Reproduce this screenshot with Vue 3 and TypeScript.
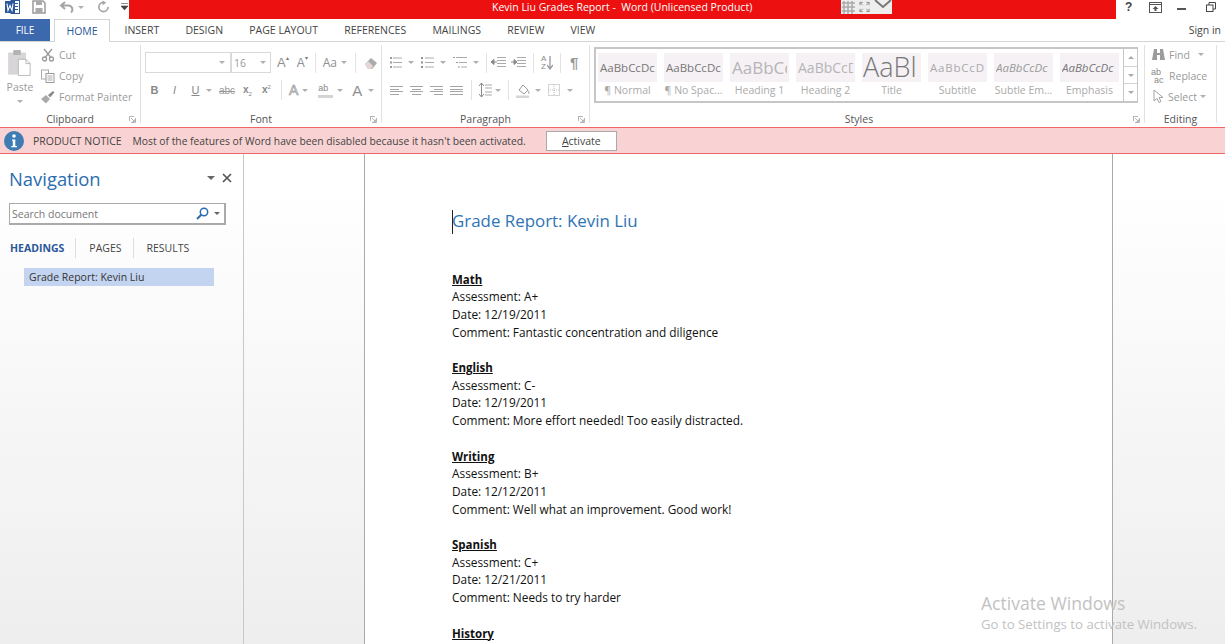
<script setup lang="ts">
interface Style { label: string; sample: string; cls: string }
const tabs: string[] = ['INSERT', 'DESIGN', 'PAGE LAYOUT', 'REFERENCES', 'MAILINGS', 'REVIEW', 'VIEW']
const styles: Style[] = [
  { label: '¶ Normal', sample: 'AaBbCcDc', cls: 's-normal' },
  { label: '¶ No Spac...', sample: 'AaBbCcDc', cls: 's-normal' },
  { label: 'Heading 1', sample: 'AaBbCc', cls: 's-h1' },
  { label: 'Heading 2', sample: 'AaBbCcD', cls: 's-h2' },
  { label: 'Title', sample: 'AaBl', cls: 's-title' },
  { label: 'Subtitle', sample: 'AaBbCcD', cls: 's-sub' },
  { label: 'Subtle Em...', sample: 'AaBbCcDc', cls: 's-em' },
  { label: 'Emphasis', sample: 'AaBbCcDc', cls: 's-em2' },
]
interface Section { title: string; lines: string[] }
const sections: Section[] = [
  { title: 'Math', lines: ['Assessment: A+', 'Date: 12/19/2011', 'Comment: Fantastic concentration and diligence'] },
  { title: 'English', lines: ['Assessment: C-', 'Date: 12/19/2011', 'Comment: More effort needed! Too easily distracted.'] },
  { title: 'Writing', lines: ['Assessment: B+', 'Date: 12/12/2011', 'Comment: Well what an improvement. Good work!'] },
  { title: 'Spanish', lines: ['Assessment: C+', 'Date: 12/21/2011', 'Comment: Needs to try harder'] },
  { title: 'History', lines: [] },
]
</script>

<template>
  <div class="app">
    <header class="titlebar">
      <div class="qat">
        <svg class="word" width="15" height="14" viewBox="0 0 15 14">
          <rect x="6" y=".5" width="8.500" height="13" fill="#fff" stroke="#2b579a" />
          <path d="M10 3.500h3M10 6.500h3M10 9.500h3" stroke="#2b579a" />
          <rect x="0" y="1" width="10" height="12" fill="#2b579a" />
          <path d="M2 3.500l1 7 2-5 2 5 1-7" fill="none" stroke="#fff" stroke-width="1.100" />
        </svg>
        <svg class="q-save" width="14" height="14" viewBox="0 0 14 14">
          <path d="M1 1h10l2 2v10H1z" fill="none" stroke="#9a9a9a" stroke-width="1.500" />
          <rect x="4" y="1" width="6" height="4" fill="#aaa" />
          <rect x="3.500" y="8" width="7" height="5" fill="#aaa" />
        </svg>
        <svg class="q-undo" width="16" height="13" viewBox="0 0 16 13">
          <path d="M6 1L2 4.500 6 8M2.500 4.500H10a4 4 0 0 1 2 7" fill="none" stroke="#a5a5a5" stroke-width="2" />
        </svg>
        <i class="caret q-c1"></i>
        <svg class="q-redo" width="13" height="14" viewBox="0 0 14 14">
          <path d="M7 2a5 5 0 1 0 5 5" fill="none" stroke="#a5a5a5" stroke-width="1.800" />
          <path d="M6 0l4 2.500L6 5z" fill="#a5a5a5" />
        </svg>
        <svg class="q-more" width="7" height="8" viewBox="0 0 7 8">
          <path d="M0 .5h7M0 3h7l-3.500 4z" fill="#444" stroke="#444" stroke-width=".6" />
        </svg>
      </div>
      <div class="redband">
        <span class="doc-title">Kevin Liu Grades Report -&nbsp; Word (Unlicensed Product)</span>
        <div class="floatbar">
          <svg width="13" height="13" viewBox="0 0 13 13">
            <path d="M0 2h13M0 6h13M0 10h13M2 0v13M6 0v13M10 0v13" stroke="#aaa" stroke-width="1.500" />
          </svg>
          <svg class="fb-full" width="11" height="12" viewBox="0 0 12 12">
            <path d="M1 4V1h3M8 1h3v3M11 8v3H8M4 11H1V8M1 1l3 3M11 1L8 4M11 11L8 8M1 11l3-3" fill="none" stroke="#888" />
          </svg>
          <svg class="fb-chev" width="18" height="10" viewBox="0 0 18 10">
            <path d="M1 1l8 7 8-7" fill="none" stroke="#777" stroke-width="2" />
          </svg>
        </div>
      </div>
      <div class="winctl">
        <span class="help">?</span>
        <svg width="13" height="11" viewBox="0 0 13 11">
          <rect x=".5" y=".5" width="12" height="10" fill="none" stroke="#555" />
          <path d="M0 2.500h13" stroke="#555" />
          <path d="M6.500 4l3 3h-2v2h-2V7h-2z" fill="#555" />
        </svg>
        <i class="minimize"></i>
        <svg width="10" height="10" viewBox="0 0 10 10">
          <rect x=".5" y="3" width="6.500" height="6.500" fill="none" stroke="#444" />
          <path d="M3 3V.5h6.500V7H7" fill="none" stroke="#444" />
        </svg>
      </div>
    </header>

    <nav class="tabs">
      <span class="tab-file">FILE</span>
      <span class="tab-home">HOME</span>
      <span v-for="t in tabs" :key="t" class="tab">{{ t }}</span>
      <span class="signin">Sign in</span>
    </nav>

    <section class="ribbon">
      <div class="group g-clip">
        <div class="g-body clip-body">
          <div class="paste">
            <svg width="26" height="28" viewBox="0 0 30 33">
              <rect x="1" y="3" width="21" height="26" fill="#d8d5d8" />
              <rect x="7" y="0" width="9" height="6" rx="1" fill="#b5b2b5" />
              <path d="M13 11h9l5 5v14H13z" fill="#fff" stroke="#b0b0b0" />
              <path d="M22 11v5h5" fill="none" stroke="#b0b0b0" />
            </svg>
            <span>Paste</span>
            <i class="caret"></i>
          </div>
          <div class="clip-list">
            <div class="clip-item">
              <svg width="14" height="14" viewBox="0 0 14 14">
                <path d="M3 1l6.500 8M11 1L4.500 9" stroke="#999" stroke-width="1.300" />
                <circle cx="3.500" cy="11" r="2" fill="none" stroke="#999" stroke-width="1.300" />
                <circle cx="10.500" cy="11" r="2" fill="none" stroke="#999" stroke-width="1.300" />
              </svg>
              <span>Cut</span>
            </div>
            <div class="clip-item">
              <svg width="14" height="14" viewBox="0 0 14 14">
                <rect x=".5" y="1" width="7" height="9" fill="#fff" stroke="#aaa" />
                <rect x="5" y="4.500" width="8" height="9" fill="#fff" stroke="#999" />
                <path d="M6.500 7h5M6.500 9h5M6.500 11h5" stroke="#aaa" />
              </svg>
              <span>Copy</span>
            </div>
            <div class="clip-item">
              <svg width="14" height="14" viewBox="0 0 14 14">
                <path d="M0 9l5-4 4 4-4 4.500z" fill="#aaa" />
                <path d="M7 5l5-4 1.500 1.500L9 7.500z" fill="#8a8a8a" />
              </svg>
              <span>Format Painter</span>
            </div>
          </div>
        </div>
        <footer class="g-label">
          <span>Clipboard</span>
          <svg class="launcher" width="7" height="7" viewBox="0 0 7 7"><path d="M0 .5h5M.5 0v5M6.500 2v4.500H2M2 2l3.500 3.500M5.500 3.500v2h-2" fill="none" stroke="#b5b5b5" /></svg>
        </footer>
      </div>

      <div class="group g-font">
        <div class="g-body rows">
          <div class="row r-font1">
            <div class="combo c-font"><i class="caret"></i></div>
            <div class="combo c-size"><span>16</span><i class="caret"></i></div>
            <span class="glyph big">A<sup>▴</sup></span>
            <span class="glyph mid">A<sup>▾</sup></span>
            <i class="sep s-a"></i>
            <span class="glyph aa">Aa</span><i class="caret"></i>
            <i class="sep s-a"></i>
            <svg class="erase" width="14" height="14" viewBox="0 0 14 14">
              <path d="M1 8l6-6 6 5-5 6H4z" fill="#aaa" />
              <path d="M1 8l3-3 5 5-2 3H4z" fill="#e6d6d6" />
            </svg>
          </div>
          <div class="row r-font2">
            <b class="fmt">B</b>
            <i class="fmt it">I</i>
            <u class="fmt und">U</u><i class="caret"></i>
            <s class="abc">abc</s>
            <span class="script">x<sub>2</sub></span>
            <span class="script">x<sup>2</sup></span>
            <i class="sep"></i>
            <span class="glyph outl">A</span><i class="caret"></i>
            <span class="hilite"><span>ab</span></span><i class="caret"></i>
            <span class="glyph col">A</span><i class="caret"></i>
          </div>
        </div>
        <footer class="g-label">
          <span>Font</span>
          <svg class="launcher" width="7" height="7" viewBox="0 0 7 7"><path d="M0 .5h5M.5 0v5M6.500 2v4.500H2M2 2l3.500 3.500M5.500 3.500v2h-2" fill="none" stroke="#b5b5b5" /></svg>
        </footer>
      </div>

      <div class="group g-para">
        <div class="g-body rows">
          <div class="row r-para1">
            <svg width="12" height="13" viewBox="0 0 12 13"><path d="M3 2h9M3 6.500h9M3 11h9" stroke="#aaa" /><path d="M0 1h2v2H0zM0 5.500h2v2H0zM0 10h2v2H0z" fill="#999" /></svg>
            <i class="caret"></i>
            <svg width="13" height="13" viewBox="0 0 13 13"><path d="M4 2h9M4 6.500h9M4 11h9" stroke="#aaa" /><path d="M0 1h2v2H0zM0 5.500h2v2H0zM0 10h2v2H0z" fill="#8f8f8f" /></svg>
            <i class="caret"></i>
            <svg width="14" height="13" viewBox="0 0 14 13"><path d="M3 1.500h11M6 6.500h8M8 11h6" stroke="#aaa" /><path d="M0 1h2v1H0zM3 6h2v1H3zM5 10.500h2v1H5z" fill="#999" /></svg>
            <i class="caret"></i>
            <i class="sep p-1"></i>
            <svg width="15" height="11" viewBox="0 0 15 11"><path d="M6 .5h9M6 3.500h9M6 6.500h9M6 9.500h9" stroke="#aaa" /><path d="M0 5h6M3 2.500L0 5l3 2.500z" fill="#8a8a8a" stroke="#8a8a8a" /></svg>
            <svg width="15" height="11" viewBox="0 0 15 11"><path d="M6 .5h9M6 3.500h9M6 6.500h9M6 9.500h9" stroke="#aaa" /><path d="M0 5h5M3 2.500L6 5 3 7.500z" fill="#8a8a8a" stroke="#8a8a8a" /></svg>
            <i class="sep p-2"></i>
            <span class="sort"><span>A<br />Z</span><svg width="6" height="14" viewBox="0 0 6 14"><path d="M3 0v12M0 9l3 4 3-4" fill="none" stroke="#999" stroke-width="1.300" /></svg></span>
            <i class="sep p-3"></i>
            <span class="pilcrow">¶</span>
          </div>
          <div class="row r-para2">
            <svg width="13" height="9" viewBox="0 0 13 9"><path d="M0 .5h13M0 3.500h9M0 5.500h13M0 8.500h9" stroke="#a5a5a5" /></svg>
            <svg width="13" height="9" viewBox="0 0 13 9"><path d="M0 .5h13M2 3.500h9M0 5.500h13M2 8.500h9" stroke="#a5a5a5" /></svg>
            <svg width="13" height="9" viewBox="0 0 13 9"><path d="M0 .5h13M4 3.500h9M0 5.500h13M4 8.500h9" stroke="#a5a5a5" /></svg>
            <svg width="13" height="9" viewBox="0 0 13 9"><path d="M0 .5h13M0 3.500h13M0 5.500h13M0 8.500h13" stroke="#a5a5a5" /></svg>
            <i class="sep q-1"></i>
            <svg width="13" height="14" viewBox="0 0 13 14"><path d="M6 2h7M6 5h7M6 9h7M6 12h7" stroke="#aaa" /><path d="M2.500 0v14M0 3l2.500-3L5 3M0 11l2.500 3L5 11" fill="none" stroke="#8a8a8a" /></svg>
            <i class="caret q-c"></i>
            <i class="sep q-2"></i>
            <svg width="15" height="15" viewBox="0 0 15 15"><path d="M3 7l4-5 5 5-4 4z" fill="#fff" stroke="#999" /><path d="M12 7c2 2 2 4 1 4s-1.500-2-1-4z" fill="#bbb" /><rect y="12.500" width="13" height="2.500" fill="#d6d6d6" /></svg>
            <i class="caret q-d"></i>
            <svg width="12" height="12" viewBox="0 0 12 12"><rect x=".5" y=".5" width="11" height="11" fill="none" stroke="#aaa" stroke-dasharray="1 1" /><path d="M6 0v12M0 6h12" stroke="#bbb" stroke-dasharray="1 1" /></svg>
            <i class="caret q-e"></i>
          </div>
        </div>
        <footer class="g-label">
          <span>Paragraph</span>
          <svg class="launcher" width="7" height="7" viewBox="0 0 7 7"><path d="M0 .5h5M.5 0v5M6.500 2v4.500H2M2 2l3.500 3.500M5.500 3.500v2h-2" fill="none" stroke="#b5b5b5" /></svg>
        </footer>
      </div>

      <div class="group g-styles">
        <div class="gallery">
          <div class="gal-items">
            <div v-for="s in styles" :key="s.cls + s.label" class="style">
              <div class="preview" :class="s.cls"><span>{{ s.sample }}</span></div>
              <div class="style-label">{{ s.label }}</div>
            </div>
          </div>
          <div class="gal-scroll">
            <span><i class="tri up"></i></span>
            <span><i class="tri"></i></span>
            <span><i class="tri bar"></i></span>
          </div>
        </div>
        <footer class="g-label">
          <span>Styles</span>
          <svg class="launcher" width="7" height="7" viewBox="0 0 7 7"><path d="M0 .5h5M.5 0v5M6.500 2v4.500H2M2 2l3.500 3.500M5.500 3.500v2h-2" fill="none" stroke="#b5b5b5" /></svg>
        </footer>
      </div>

      <div class="group g-edit">
        <div class="g-body edit-list">
          <div class="edit-item">
            <svg width="15" height="14" viewBox="0 0 15 14"><path d="M3 1h3v4h3V1h3l2 11h-5V7H6v5H1z" fill="#9c9c9c" /></svg>
            <span>Find</span><i class="caret find-c"></i>
          </div>
          <div class="edit-item">
            <span class="abac"><span>ab</span><span>ac</span></span>
            <span>Replace</span>
          </div>
          <div class="edit-item">
            <svg width="14" height="15" viewBox="0 0 14 15"><path d="M3 1v11l3-2.500 2 4 2-1-2-4h4z" fill="#fff" stroke="#a5a5a5" /></svg>
            <span>Select</span><i class="caret"></i>
          </div>
        </div>
        <footer class="g-label"><span>Editing</span></footer>
      </div>
    </section>

    <section class="notice">
      <svg width="20" height="20" viewBox="0 0 20 20">
        <circle cx="10" cy="10" r="10" fill="#3f7cb4" />
        <circle cx="10" cy="5" r="1.800" fill="#fff" />
        <path d="M8 8.500h3.300V15H13v1.200H7.300V15h1.500V9.700H8z" fill="#fff" />
      </svg>
      <strong>PRODUCT NOTICE</strong>
      <span class="notice-msg">Most of the features of Word have been disabled because it hasn't been activated.</span>
      <button class="activate" type="button"><u>A</u>ctivate</button>
    </section>

    <main class="workspace">
      <aside class="nav">
        <div class="nav-head">
          <h2>Navigation</h2>
          <i class="nav-menu"></i>
          <svg width="10" height="10" viewBox="0 0 10 10"><path d="M1 1l8 8M9 1l-8 8" stroke="#555" stroke-width="1.700" /></svg>
        </div>
        <div class="search">
          <span>Search document</span>
          <svg width="13" height="13" viewBox="0 0 13 13"><circle cx="8" cy="5" r="3.700" fill="none" stroke="#2b6cb0" stroke-width="1.500" /><path d="M5.300 7.700L1 12" stroke="#2b6cb0" stroke-width="2" /></svg>
          <i class="caret dark"></i>
        </div>
        <div class="nav-tabs">
          <span class="on">HEADINGS</span>
          <span>PAGES</span>
          <span>RESULTS</span>
        </div>
        <div class="heading-item">Grade Report: Kevin Liu</div>
      </aside>
      <div class="canvas">
        <article class="page">
          <h1><i class="cursor"></i>Grade Report: Kevin Liu</h1>
          <div v-for="sec in sections" :key="sec.title" class="sec">
            <h3>{{ sec.title }}</h3>
            <p v-for="l in sec.lines" :key="l">{{ l }}</p>
          </div>
        </article>
        <div class="watermark">
          <div class="wm-1">Activate Windows</div>
          <div class="wm-2">Go to Settings to activate Windows.</div>
        </div>
      </div>
    </main>
  </div>
</template>

<style>
html, body { margin: 0; height: 100%; overflow: hidden; background: #fff; }
</style>

<style scoped>
.app { width: 1225px; height: 644px; overflow: hidden; display: flex; flex-direction: column; font-family: "Open Sans", "Noto Sans", sans-serif; background: #fff; color: #444; }
svg { flex: none; display: block; }
i { font-style: normal; }

.titlebar { height: 19px; display: flex; flex: none; }
.qat { width: 129px; display: flex; align-items: center; flex: none; height: 14px; }
.word { margin-left: 5px; }
.q-save { margin-left: 12px; }
.q-undo { margin-left: 13px; }
.q-c1 { margin-left: 3px; }
.q-redo { margin-left: 13px; }
.q-more { margin-left: 11px; }
.redband { width: 987px; height: 19px; background: #ec1010; flex: none; display: flex; position: relative; }
.doc-title { position: absolute; left: 363px; top: 0; line-height: 15px; font-size: 10.500px; color: #fff; white-space: nowrap; }
.floatbar { position: absolute; left: 712px; top: 0; width: 51px; height: 14px; background: #eee; display: flex; align-items: center; overflow: hidden; }
.floatbar svg { margin-left: 1px; }
.floatbar .fb-full { margin-left: 4px; }
.floatbar .fb-chev { margin-left: 4px; margin-top: -7px; }
.winctl { flex: 1; display: flex; align-items: center; padding-left: 9px; gap: 15px; height: 14px; }
.help { font: bold 12px "Liberation Sans", sans-serif; color: #444; width: 9px; }
.minimize { width: 9px; height: 2px; background: #555; margin-left: 0; margin-right: 5px; margin-top: 3px; }

.tabs { height: 22px; flex: none; display: flex; align-items: stretch; font-size: 10.500px; line-height: 23px; color: #444; position: relative; }
.tab-file { width: 50px; background: #3c68ae; color: #fff; text-align: center; font-size: 10px; }
.tab-home { width: 56px; margin-left: 4px; border: 1px solid #d4d4d4; border-bottom: none; text-align: center; color: #2b579a; box-sizing: border-box; background: #fff; height: 23px; z-index: 1; }
.tab { padding: 0 13.100px; white-space: nowrap; }
.tab-home + .tab { margin-left: 1.400px; }
.signin { margin-left: auto; margin-right: 4px; }

.ribbon { height: 86px; flex: none; display: flex; border-top: 1px solid #d4d4d4; box-sizing: border-box; color: #9a9a9a; font-size: 10.500px; }
.group { display: flex; flex-direction: column; border-right: 1px solid #e1e1e1; height: 78px; margin-top: 3px; box-sizing: border-box; position: relative; flex: none; }
.g-clip { width: 141px; }
.g-font { width: 241px; }
.g-para { width: 208px; }
.g-styles { width: 555px; }
.g-edit { width: 72px; }
.g-body { flex: 1; min-height: 0; }
.g-label { height: 17px; flex: none; text-align: center; color: #555; font-size: 10.500px; line-height: 26px; position: relative; }
.launcher { position: absolute; right: 4px; bottom: 0; }

.clip-body { display: flex; }
.paste { width: 40px; display: flex; flex-direction: column; align-items: center; }
.paste svg { margin-top: 5px; }
.paste span { margin-top: 2px; line-height: 14px; }
.paste .caret { margin-top: 6px; }
.clip-list { margin-left: 1px; margin-top: -1px; }
.clip-item { display: flex; align-items: center; gap: 4px; height: 21px; white-space: nowrap; }

.caret { display: inline-block; flex: none; width: 0; height: 0; border-left: 3px solid transparent; border-right: 3px solid transparent; border-top: 3px solid #b0b0b0; }
.caret.dark { border-top-color: #666; }

.rows { display: flex; flex-direction: column; }
.row { display: flex; align-items: center; white-space: nowrap; }
.sep { flex: none; width: 1px; height: 20px; background: #e3e3e3; }

.r-font1 { height: 21px; margin-top: 7px; padding-left: 4px; }
.combo { height: 21px; box-sizing: border-box; border: 1px solid #d9d9d9; display: flex; align-items: center; justify-content: flex-end; padding-right: 3px; color: #9a9a9a; }
.c-font { width: 86px; padding-right: 5px; }
.c-size { width: 40px; justify-content: space-between; padding-left: 2px; padding-right: 4px; font-size: 10.500px; }
.glyph { color: #8f8f8f; line-height: 1; font-family: "Liberation Sans", sans-serif; }
.glyph sup { font-size: 6px; vertical-align: 7px; line-height: 0; color: #777; }
.big { font-size: 13px; margin-left: 6px; }
.mid { font-size: 12px; margin-left: 8px; }
.s-a { margin-left: 7px; }
.aa { font-size: 12px; margin-left: 7px; margin-right: 4px; font-family: "Open Sans", sans-serif; }
.aa + .caret { margin-right: 1px; }
.erase { margin-left: 8px; }
.r-font2 { height: 20px; margin-top: 7px; padding-left: 9px; }
.fmt { font: 11px "Liberation Sans", sans-serif; color: #888; width: 9px; text-align: center; display: inline-block; }
b.fmt { font-weight: bold; }
.it { font-style: italic; margin-left: 11px; }
.und { margin-left: 12px; }
.und + .caret { margin-left: 6px; }
.abc { margin-left: 7px; font: 10px "Liberation Sans", sans-serif; color: #999; width: 16px; }
.script { font: bold 10px "Liberation Sans", sans-serif; color: #888; margin-left: 8px; width: 11px; line-height: 1; }
.script sub, .script sup { font-size: 6px; line-height: 0; font-weight: normal; }
.r-font2 .sep { margin-left: 8px; }
.outl { font-size: 14px; color: #fff; -webkit-text-stroke: .7px #999; margin-left: 7px; }
.outl + .caret { margin-left: 4px; }
.hilite { margin-left: 10px; width: 15px; height: 15px; box-sizing: border-box; border-bottom: 3px solid #d4d4d4; font: 9px/11px "Liberation Sans", sans-serif; color: #888; }
.hilite + .caret { margin-left: 4px; }
.col { font-size: 15px; margin-left: 9px; }
.col + .caret { margin-left: 6px; }

.r-para1 { height: 21px; margin-top: 7px; padding-left: 8px; }
.r-para1 > .caret { margin-left: 6px; margin-right: 7px; }
.r-para1 > svg + svg { margin-left: 5px; }
.p-1 { margin-right: 4px; }
.p-2 { margin-left: 7px; margin-right: 7px; }
.p-3 { margin-right: 6px; }
.sort { display: flex; align-items: center; font: 8px/8px "Liberation Sans", sans-serif; color: #888; gap: 1px; width: 14px; margin-right: 5px; }
.pilcrow { font: bold 15px "Liberation Sans", sans-serif; color: #999; margin-left: 3px; }
.r-para2 { height: 20px; margin-top: 7px; padding-left: 8px; }
.r-para2 > svg + svg { margin-left: 7px; }
.q-1 { margin-left: 8px; margin-right: 7px; }
.q-c { margin-left: 3px; margin-right: 7px; }
.q-2 { margin-right: 7px; }
.q-d { margin-left: 4px; margin-right: 7px; }
.q-e { margin-left: 7px; }

.g-styles { padding-left: 4px; }
.gallery { width: 544px; height: 56px; flex: none; margin-top: 2px; border: 1px solid #c6c6c6; border-width: 2px 1px 2px 2px; box-sizing: border-box; display: flex; }
.gal-items { flex: 1; display: flex; gap: 7px; padding: 4px 0 0 2px; overflow: hidden; min-width: 0; }
.style { width: 59px; flex: none; }
.preview { height: 29px; background: #f5f1f5; display: flex; align-items: center; justify-content: center; overflow: hidden; white-space: nowrap; color: #777; }
.preview span { display: block; width: 55px; overflow: hidden; }
.s-normal { font-size: 11.500px; }
.s-h1 { font-size: 17px; color: #b5b5b5; }
.s-h2 { font-size: 14px; color: #b5b5b5; }
.s-title { font-size: 27px; font-weight: 300; color: #777; box-sizing: border-box; padding: 0 0 3px 1px; }
.s-title span { width: 58px; line-height: 25px; }
.s-sub { font-size: 11.500px; letter-spacing: .8px; color: #aaa; }
.s-em { font-size: 11.500px; font-style: italic; color: #999; }
.s-em2 { font-size: 11.500px; font-style: italic; color: #777; }
.style-label { text-align: center; font-size: 10.500px; color: #aaa; line-height: 17px; white-space: nowrap; }
.gal-scroll { width: 13px; flex: none; display: flex; flex-direction: column; border-left: 1px solid #c6c6c6; }
.gal-scroll span { flex: 1; display: flex; align-items: center; justify-content: center; border-bottom: 1px solid #d4d4d4; }
.gal-scroll span:last-child { border-bottom: none; }
.tri { width: 0; height: 0; border-left: 3px solid transparent; border-right: 3px solid transparent; border-top: 3px solid #aaa; }
.tri.up { border-top: none; border-bottom: 3px solid #aaa; }
.tri.bar { position: relative; }
.g-styles .g-label { height: 20px; line-height: 32px; padding-right: 20px; }

.edit-list { margin-top: -1px; padding: 0 0 0 6px; }
.edit-item { display: flex; align-items: center; gap: 3px; height: 21px; white-space: nowrap; }
.find-c { margin-left: 5px; }
.abac { width: 15px; font: 9px/8px "Liberation Sans", sans-serif; color: #888; display: flex; flex-direction: column; }
.abac span:last-child { padding-left: 3px; }

.notice { height: 27px; flex: none; box-sizing: border-box; background: #f9d3d3; border-top: 1px solid #e66; border-bottom: 1px solid #e66; display: flex; align-items: center; padding-left: 4px; font-size: 10.500px; color: #444; white-space: nowrap; }
.notice strong { font-weight: 400; margin-left: 9px; color: #444; }
.notice-msg { margin-left: 11px; font-size: 10.300px; }
.activate { margin-left: 20px; width: 71px; height: 20px; box-sizing: border-box; border: 1px solid #aaa; background: #fff; padding: 0; font: 10.500px "Open Sans", sans-serif; color: #444; }

.workspace { flex: 1; min-height: 0; display: flex; }
.nav { width: 244px; flex: none; box-sizing: border-box; border-right: 1px solid #c8c8c8; background: linear-gradient(#fff 0, #fff 30px, #eee 490px); }
.nav-head { display: flex; align-items: center; height: 48px; margin-bottom: 1px; padding-left: 9px; padding-right: 11px; }
.nav-head h2 { margin: 0; font-weight: 400; font-size: 18.400px; color: #2b6cb0; flex: 1; }
.nav-menu { width: 0; height: 0; border-left: 4px solid transparent; border-right: 4px solid transparent; border-top: 4px solid #666; margin-right: 7px; }
.search { margin-left: 9px; width: 217px; height: 22px; box-sizing: border-box; border: 1px solid #aaa; border-width: 1px 2px 2px 1px; background: #fff; display: flex; align-items: center; padding: 0 4px 0 2px; font-size: 10.500px; color: #777; }
.search span { flex: 1; }
.search .caret { margin-left: 5px; }
.nav-tabs { display: flex; align-items: center; margin: 13px 0 0 10px; font-size: 10.500px; line-height: 20px; color: #444; }
.nav-tabs span { padding-right: 11px; margin-right: 13px; border-right: 1px solid #ddd; }
.nav-tabs span:last-child { border: none; }
.nav-tabs .on { color: #2b579a; font-weight: 700; padding-right: 11px; }
.heading-item { margin: 10px 0 0 24px; width: 190px; height: 18px; box-sizing: border-box; background: #c3d4f0; padding-left: 5px; line-height: 18px; font-size: 10.500px; color: #333; }

.canvas { flex: 1; position: relative; display: flex; min-width: 0; background: linear-gradient(#fff 0, #fff 30px, #eee 490px); }
.page { margin-left: 120px; width: 749px; box-sizing: border-box; background: #fff; border-left: 1px solid #aaa; border-right: 1px solid #aaa; padding: 55px 0 0 87px; color: #111; font-size: 11.850px; line-height: 17.700px; flex: none; }
.page h1 { margin: 0 0 37.500px; font-weight: 400; font-size: 16.900px; line-height: 24px; color: #2e74b5; position: relative; white-space: nowrap; }
.cursor { position: absolute; left: 0; top: 1px; width: 1px; height: 24px; background: #222; }
.sec { margin-bottom: 17.700px; }
.page h3 { margin: 0; font-size: 11.500px; font-weight: 700; text-decoration: underline; line-height: 17.700px; }
.page p { margin: 0; white-space: nowrap; }
.watermark { position: absolute; left: 737px; top: 439px; color: #c2c2c2; white-space: nowrap; }
.wm-1 { font-size: 17.600px; line-height: 21px; }
.wm-2 { font-size: 13.200px; line-height: 21px; }
</style>
